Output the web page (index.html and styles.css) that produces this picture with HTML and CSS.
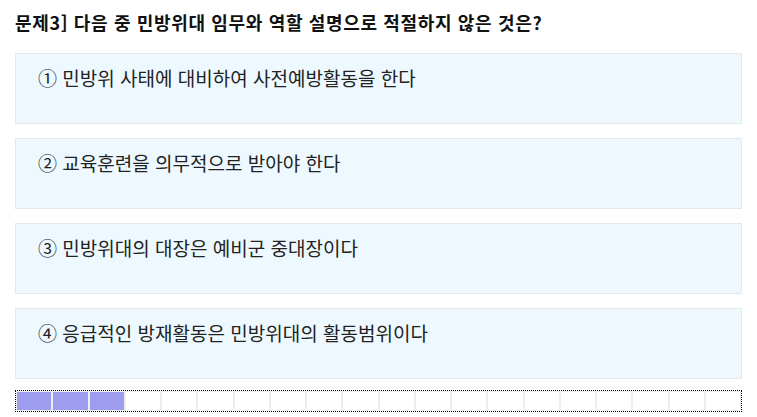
FILE: index.html
```html
<!DOCTYPE html>
<html lang="ko">
<head>
    <meta charset="UTF-8">
    <meta name="viewport" content="width=device-width, initial-scale=1.0">
    <title>민방위 문제</title>
    <link rel="stylesheet" href="styles.css">
</head>
<body>
    <h1 class="question">문제3] 다음 중 민방위대 임무와 역할 설명으로 적절하지 않은 것은?</h1>

    <div class="choices">
        <div class="choice">① 민방위 사태에 대비하여 사전예방활동을 한다</div>
        <div class="choice">② 교육훈련을 의무적으로 받아야 한다</div>
        <div class="choice">③ 민방위대의 대장은 예비군 중대장이다</div>
        <div class="choice">④ 응급적인 방재활동은 민방위대의 활동범위이다</div>
    </div>

    <div class="progress">
        <div class="cell done"></div>
        <div class="cell done"></div>
        <div class="cell done"></div>
        <div class="cell"></div>
        <div class="cell"></div>
        <div class="cell"></div>
        <div class="cell"></div>
        <div class="cell"></div>
        <div class="cell"></div>
        <div class="cell"></div>
        <div class="cell"></div>
        <div class="cell"></div>
        <div class="cell"></div>
        <div class="cell"></div>
        <div class="cell"></div>
        <div class="cell"></div>
        <div class="cell"></div>
        <div class="cell"></div>
        <div class="cell"></div>
        <div class="cell"></div>
    </div>
</body>
</html>
```

FILE: styles.css
```css
body {
    margin: 0;
    padding: 10px 15px 0;
    font-family: "Noto Sans CJK KR", "Noto Sans", sans-serif;
    background-color: #fff;
    color: #111;
}

.question {
    margin: 0 0 19px;
    font-size: 18px;
    font-weight: bold;
    line-height: 24px;
    letter-spacing: 0.65px;
}

.choices {
    display: flex;
    flex-direction: column;
    gap: 14px;
}

.choice {
    height: 71px;
    box-sizing: border-box;
    padding: 11px 22px;
    background-color: #edf9ff;
    border: 1px solid #e6e9eb;
    font-size: 19px;
    line-height: 26px;
    color: #222;
}

.progress {
    display: flex;
    margin-top: 11px;
    height: 22px;
    box-sizing: border-box;
    border: 1px dotted #000;
}

.cell {
    flex: 1;
    border: 1px solid #eee;
}

.cell.done {
    background-color: #9d9cef;
}
```
